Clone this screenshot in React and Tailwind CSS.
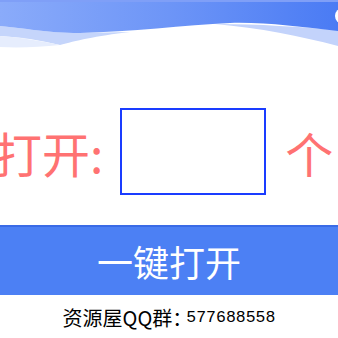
import React from "react";

const Header = () => (
  <div className="h-[48px] w-full">
    <svg width="338" height="48" viewBox="0 0 338 48" className="block">
      <defs>
        <linearGradient id="hd" x1="0" y1="0" x2="1" y2="0">
          <stop offset="0" stopColor="#8aabfa" />
          <stop offset="0.5" stopColor="#6d95f7" />
          <stop offset="1" stopColor="#4a7bf4" />
        </linearGradient>
      </defs>
      {/* light bands under the wave */}
      <path d="M0 26 C25 28 45 33 80 33 L130 32 C95 36 75 41 60 45 C40 40 20 37 0 36 Z" fill="#c5d5fb" />
      <path d="M0 36 C20 37 40 41 60 45 C40 47 20 48 0 47 Z" fill="#e6edfd" />
      <path d="M215 24 C260 24 300 27 338 30 L338 46 C300 36 260 28 215 24 Z" fill="#c3d3fb" />
      {/* blue top with wave bottom */}
      <path d="M0 0 H338 V31 C300 27 265 22 230 23 C185 25 130 32 80 33 C45 33 25 28 0 26 Z" fill="url(#hd)" />
      <rect x="0" y="0" width="338" height="2" fill="#7f9ff7" />
      <circle cx="343" cy="16" r="8" fill="#ffffff" />
    </svg>
  </div>
);

const App = () => {
  return (
    <div className="w-[338px] h-[338px] bg-white overflow-hidden" style={{ fontFamily: '"Noto Sans CJK SC", "Noto Sans", sans-serif' }}>
      <Header />

      <div className="h-[177px] pt-[60px]">
        <div className="flex items-center h-[87px] ml-[-6px]">
          <span className="text-[48px] leading-none text-[#ff7272] mr-[17px]">打开:</span>
          <div className="w-[146px] h-[87px] border-2 border-[#1a3cff] bg-white shrink-0" />
          <span className="text-[48px] leading-none text-[#ff7272] ml-[19px]">个</span>
        </div>
      </div>

      <button className="w-full h-[70px] bg-[#4c80f4] border-t-2 border-[#3a6be6] flex items-center justify-center text-white text-[36px] leading-none">
        一键打开
      </button>

      <div className="h-[43px] pt-[3px] flex items-center justify-center text-black">
        <span className="text-[20px] leading-none">资源屋QQ群：</span>
        <span className="text-[16.5px] leading-none ml-[-6px]" style={{ fontFamily: '"Liberation Mono", monospace' }}>577688558</span>
      </div>
    </div>
  );
};

export default App;
